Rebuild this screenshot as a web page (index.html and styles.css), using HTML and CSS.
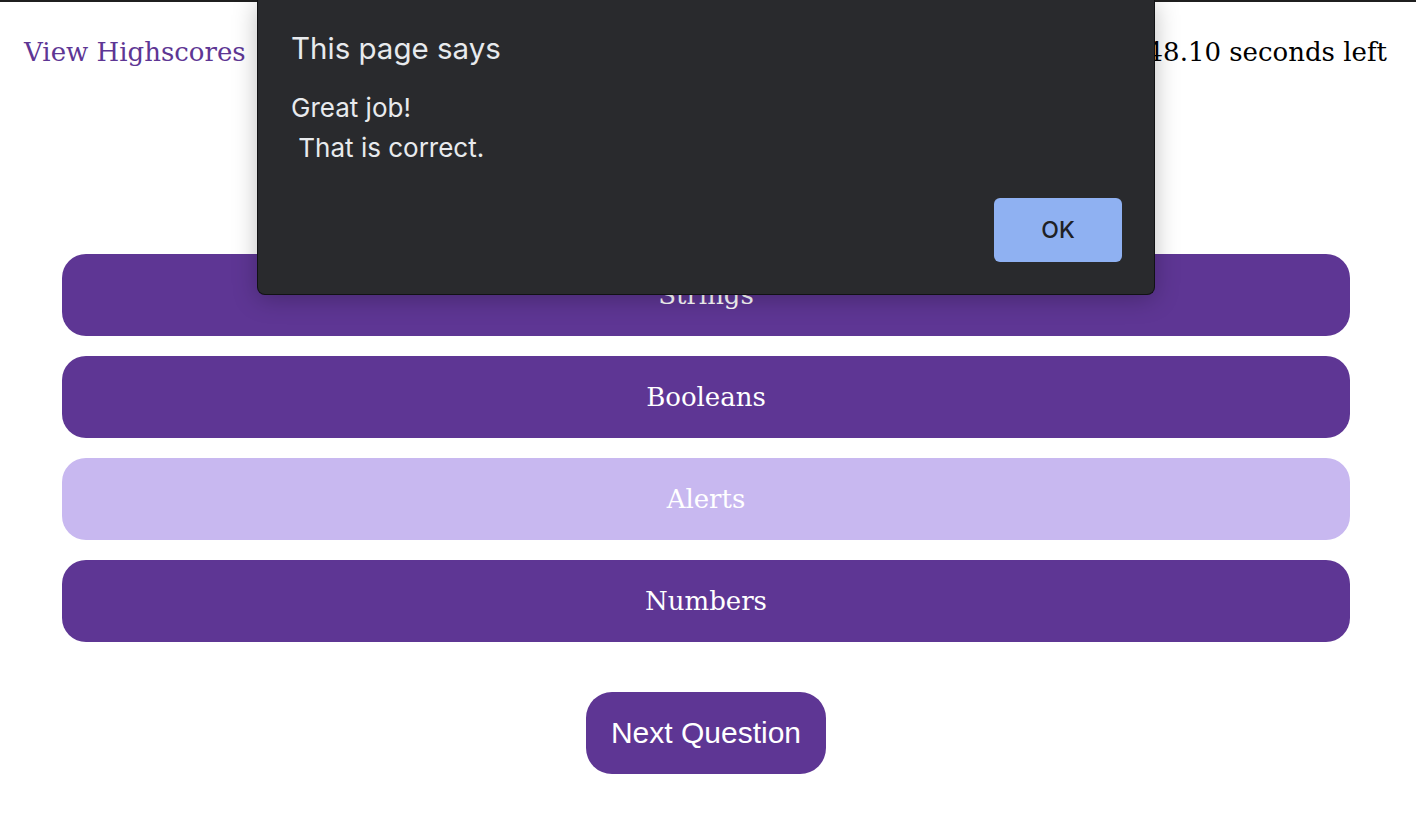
FILE: index.html
```html
<!DOCTYPE html>
<html lang="en">
<head>
<meta charset="utf-8">
<title>Quiz</title>
<link rel="stylesheet" href="styles.css">
</head>
<body>
<div class="frame">
  <header class="topbar">
    <a class="highscores" href="#">View Highscores</a>
    <span class="timer">48.10 seconds left</span>
  </header>
  <main class="quiz">
    <div class="question-space"></div>
    <div class="answers">
      <button class="answer">Strings</button>
      <button class="answer">Booleans</button>
      <button class="answer answer-correct">Alerts</button>
      <button class="answer">Numbers</button>
    </div>
    <div class="next-row">
      <button class="next">Next Question</button>
    </div>
  </main>
</div>
<div class="dialog" role="alertdialog">
  <div class="dialog-title">This page says</div>
  <div class="dialog-body">Great job!<br>&nbsp;That is correct.</div>
  <div class="dialog-actions">
    <button class="dialog-ok">OK</button>
  </div>
</div>
</body>
</html>
```
FILE: styles.css
```css
html, body {
  margin: 0;
  padding: 0;
  background: #ffffff;
}
body {
  font-family: "DejaVu Serif", "Liberation Serif", serif;
  color: #000;
}
.frame {
  border-top: 2px solid #1f1f1f;
  min-height: 824px;
}
.topbar {
  display: flex;
  justify-content: space-between;
  align-items: center;
  padding: 0 29px 0 24px;
  height: 100px;
}
.highscores {
  color: #5e3694;
  text-decoration: none;
  font-size: 26px;
}
.timer {
  font-size: 26px;
}
.quiz {
  padding: 0 66px 0 62px;
}
.question-space {
  height: 152px;
}
.answers {
  display: flex;
  flex-direction: column;
  gap: 20px;
}
.answer {
  height: 82px;
  border: none;
  border-radius: 24px;
  background: #5e3694;
  color: #ffffff;
  font-family: "DejaVu Serif", "Liberation Serif", serif;
  font-size: 26px;
  padding: 0;
}
.answer-correct {
  background: #c8b8f0;
}
.next-row {
  display: flex;
  justify-content: center;
  padding-top: 50px;
}
.next {
  width: 240px;
  height: 82px;
  border: none;
  border-radius: 26px;
  background: #5e3694;
  color: #ffffff;
  font-family: "Liberation Sans", Arial, sans-serif;
  font-size: 30px;
  padding: 0;
}
.dialog {
  position: absolute;
  left: 257px;
  top: 0;
  width: 898px;
  height: 295px;
  box-sizing: border-box;
  background: #292a2d;
  border: 1px solid #111214;
  border-top: none;
  border-radius: 0 0 8px 8px;
  box-shadow: 0 4px 24px rgba(0, 0, 0, 0.25);
  padding: 29px 32px 0 33px;
  font-family: Inter, "Noto Sans", sans-serif;
  color: #e8eaed;
}
.dialog-title {
  font-size: 29.5px;
  line-height: 38px;
}
.dialog-body {
  margin-top: 21px;
  font-size: 26px;
  line-height: 40px;
}
.dialog-actions {
  display: flex;
  justify-content: flex-end;
  margin-top: 30px;
}
.dialog-ok {
  width: 128px;
  height: 64px;
  border: none;
  border-radius: 6px;
  background: #8fb1f2;
  color: #202124;
  font-family: Inter, "Noto Sans", sans-serif;
  font-size: 23px;
  font-weight: 500;
}
```
